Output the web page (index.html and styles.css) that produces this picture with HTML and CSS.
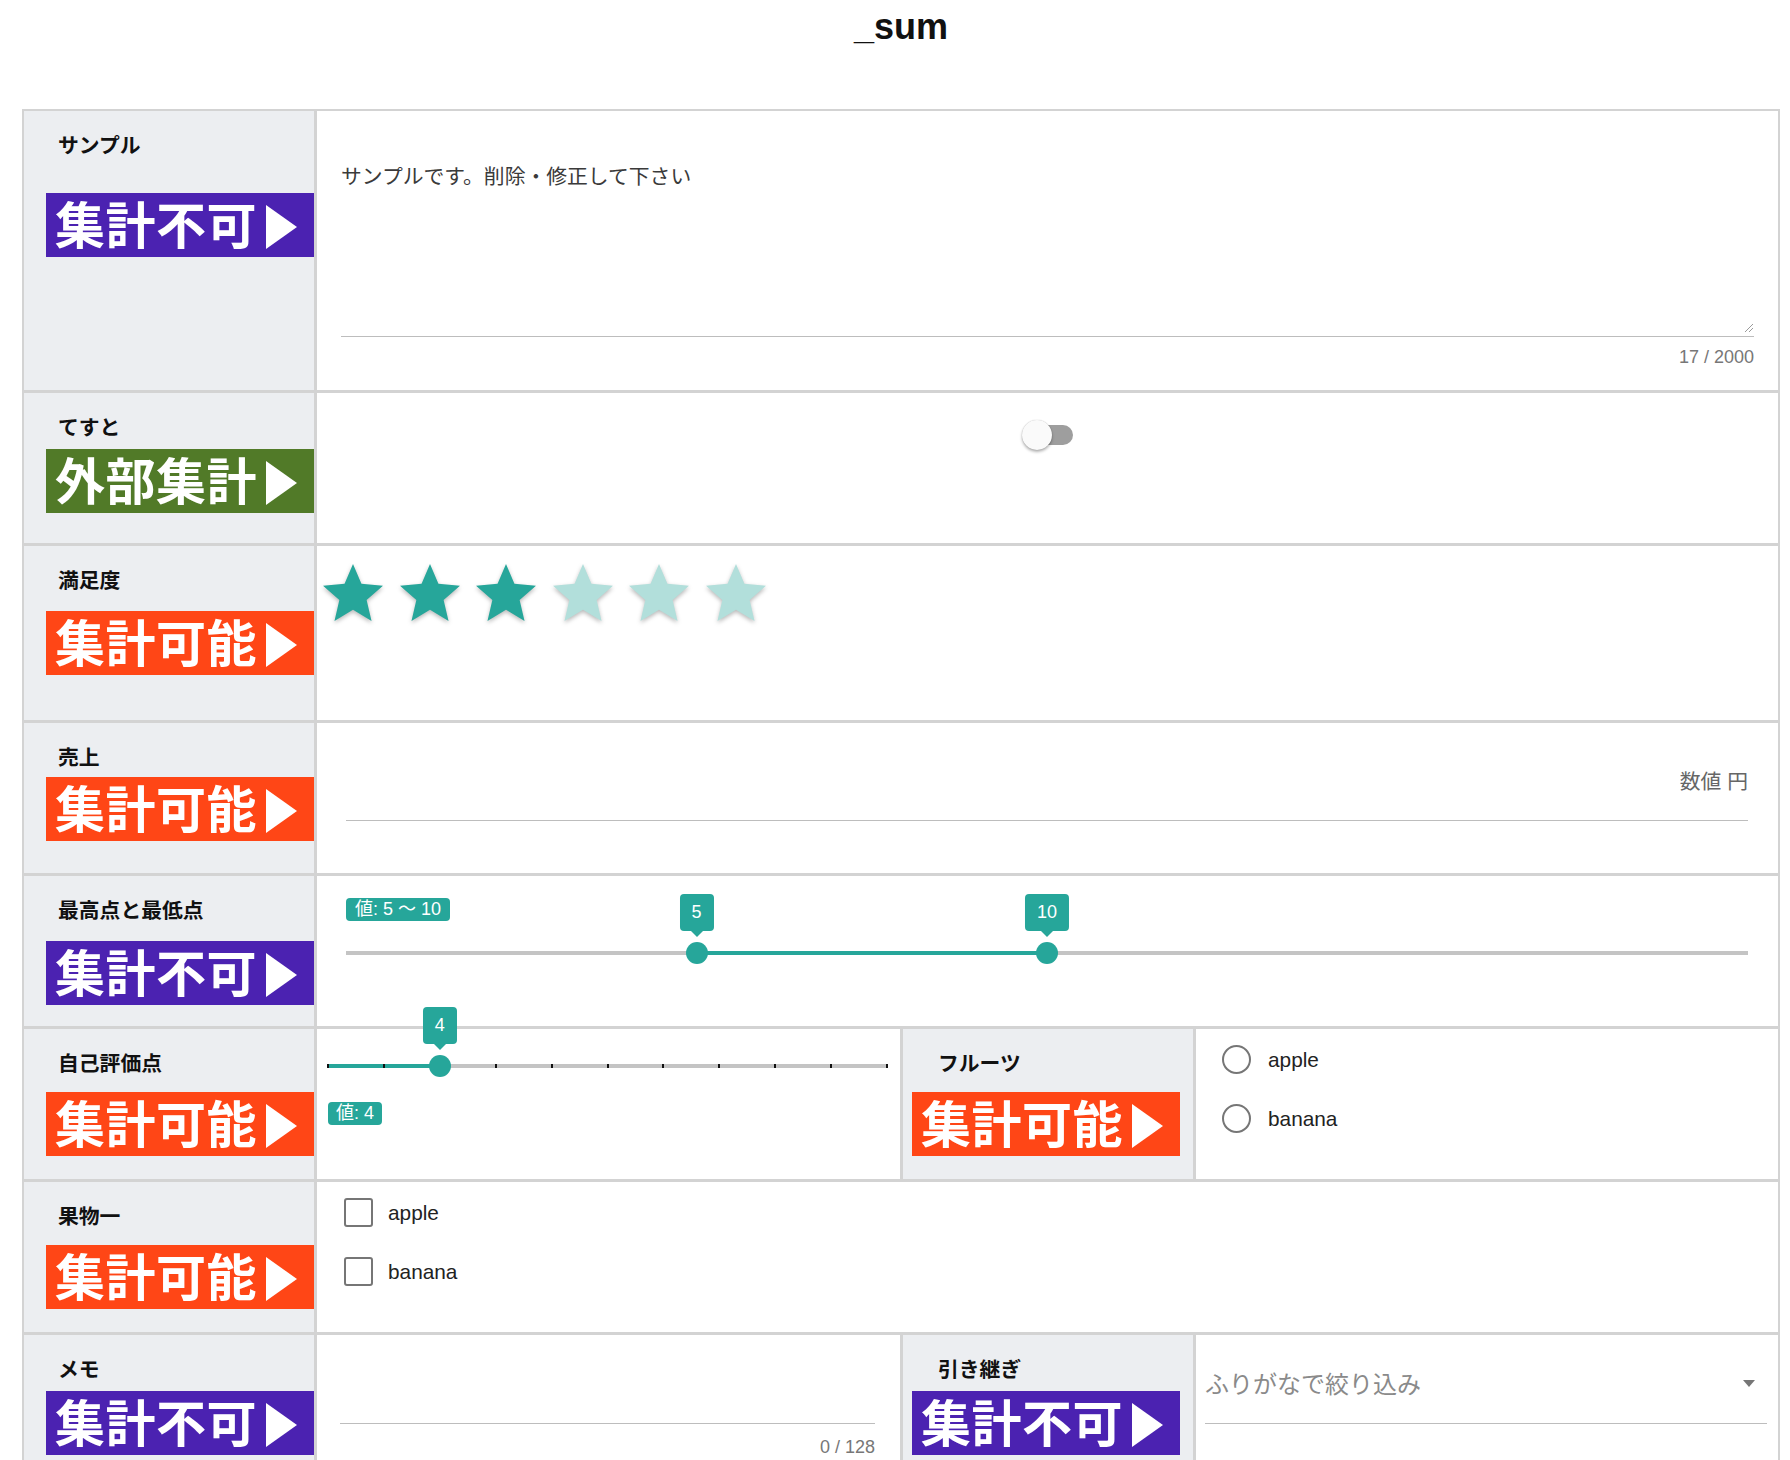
FILE: index.html
```html
<!DOCTYPE html>
<html lang="ja">
<head>
<meta charset="utf-8">
<title>_sum</title>
<link rel="stylesheet" href="styles.css">
</head>
<body>
<div class="page">
  <h1 class="title">_sum</h1>
  <div class="sheet">

    <div class="row row--tall">
      <div class="label-cell">
        <div class="label">サンプル</div>
        <div class="badge badge--ng badge--mt33">集計不可</div>
      </div>
      <div class="value-cell">
        <div class="textfield">
          <div class="textarea">サンプルです。削除・修正して下さい
            <svg class="resize" width="8" height="8" viewBox="0 0 8 8"><path d="M8 0L0 8M8 4L4 8" stroke="#9a9a9a" stroke-width="1" fill="none"/></svg>
          </div>
          <div class="counter">17 / 2000</div>
        </div>
      </div>
    </div>

    <div class="row">
      <div class="label-cell">
        <div class="label">てすと</div>
        <div class="badge badge--ext badge--mt7">外部集計</div>
      </div>
      <div class="value-cell">
        <div class="toggle">
          <span class="toggle-track"></span>
          <span class="toggle-knob"></span>
        </div>
      </div>
    </div>

    <div class="row row--rating">
      <div class="label-cell">
        <div class="label">満足度</div>
        <div class="badge badge--ok badge--mt16">集計可能</div>
      </div>
      <div class="value-cell">
        <div class="stars">
          <svg class="star star--on" viewBox="0 0 24 24"><path d="M12,17.27L18.18,21L16.54,13.97L22,9.24L14.81,8.62L12,2L9.19,8.62L2,9.24L7.45,13.97L5.82,21L12,17.27Z"/></svg>
          <svg class="star star--on" viewBox="0 0 24 24"><path d="M12,17.27L18.18,21L16.54,13.97L22,9.24L14.81,8.62L12,2L9.19,8.62L2,9.24L7.45,13.97L5.82,21L12,17.27Z"/></svg>
          <svg class="star star--on" viewBox="0 0 24 24"><path d="M12,17.27L18.18,21L16.54,13.97L22,9.24L14.81,8.62L12,2L9.19,8.62L2,9.24L7.45,13.97L5.82,21L12,17.27Z"/></svg>
          <svg class="star star--off" viewBox="0 0 24 24"><path d="M12,17.27L18.18,21L16.54,13.97L22,9.24L14.81,8.62L12,2L9.19,8.62L2,9.24L7.45,13.97L5.82,21L12,17.27Z"/></svg>
          <svg class="star star--off" viewBox="0 0 24 24"><path d="M12,17.27L18.18,21L16.54,13.97L22,9.24L14.81,8.62L12,2L9.19,8.62L2,9.24L7.45,13.97L5.82,21L12,17.27Z"/></svg>
          <svg class="star star--off" viewBox="0 0 24 24"><path d="M12,17.27L18.18,21L16.54,13.97L22,9.24L14.81,8.62L12,2L9.19,8.62L2,9.24L7.45,13.97L5.82,21L12,17.27Z"/></svg>
        </div>
      </div>
    </div>

    <div class="row">
      <div class="label-cell">
        <div class="label">売上</div>
        <div class="badge badge--ok badge--mt5">集計可能</div>
      </div>
      <div class="value-cell">
        <div class="textfield textfield--number">
          <div class="number-input">数値 円</div>
        </div>
      </div>
    </div>

    <div class="row">
      <div class="label-cell">
        <div class="label">最高点と最低点</div>
        <div class="badge badge--ng badge--mt16">集計不可</div>
      </div>
      <div class="value-cell">
        <div class="slider slider--range">
          <span class="chip">値: 5 〜 10</span>
          <div class="range range--spaced">
            <span class="range-track"></span>
            <span class="range-fill" style="left: 25%; width: 25%;"></span>
            <span class="range-thumb" style="left: 25%;"><span class="thumb-label">5</span></span>
            <span class="range-thumb" style="left: 50%;"><span class="thumb-label">10</span></span>
          </div>
        </div>
      </div>
    </div>

    <div class="row">
      <div class="label-cell">
        <div class="label">自己評価点</div>
        <div class="badge badge--ok">集計可能</div>
      </div>
      <div class="value-cell value-cell--half">
        <div class="slider slider--ticks">
          <div class="range">
            <span class="range-track"></span>
            <span class="range-fill" style="left: 0%; width: 20%;"></span>
            <span class="tick" style="left: 0%;"></span>
            <span class="tick" style="left: 10%;"></span>
            <span class="tick" style="left: 20%;"></span>
            <span class="tick" style="left: 30%;"></span>
            <span class="tick" style="left: 40%;"></span>
            <span class="tick" style="left: 50%;"></span>
            <span class="tick" style="left: 60%;"></span>
            <span class="tick" style="left: 70%;"></span>
            <span class="tick" style="left: 80%;"></span>
            <span class="tick" style="left: 90%;"></span>
            <span class="tick" style="left: 100%;"></span>
            <span class="range-thumb" style="left: 20%;"><span class="thumb-label">4</span></span>
          </div>
          <span class="chip chip--below">値: 4</span>
        </div>
      </div>
      <div class="label-cell label-cell--inner">
        <div class="label">フルーツ</div>
        <div class="badge badge--ok">集計可能</div>
      </div>
      <div class="value-cell">
        <div class="options options--radio">
          <div class="option"><span class="radio"></span><span class="option-text">apple</span></div>
          <div class="option"><span class="radio"></span><span class="option-text">banana</span></div>
        </div>
      </div>
    </div>

    <div class="row">
      <div class="label-cell">
        <div class="label">果物一</div>
        <div class="badge badge--ok">集計可能</div>
      </div>
      <div class="value-cell">
        <div class="options options--check">
          <div class="option"><span class="checkbox"></span><span class="option-text option-text--check">apple</span></div>
          <div class="option"><span class="checkbox"></span><span class="option-text option-text--check">banana</span></div>
        </div>
      </div>
    </div>

    <div class="row">
      <div class="label-cell">
        <div class="label">メモ</div>
        <div class="badge badge--ng badge--mt7">集計不可</div>
      </div>
      <div class="value-cell value-cell--half">
        <div class="textfield textfield--memo">
          <div class="memo-input"></div>
          <div class="counter counter--memo">0 / 128</div>
        </div>
      </div>
      <div class="label-cell label-cell--inner">
        <div class="label">引き継ぎ</div>
        <div class="badge badge--ng badge--mt7">集計不可</div>
      </div>
      <div class="value-cell">
        <div class="select">
          <div class="select-field">
            <span class="select-placeholder">ふりがなで絞り込み</span>
            <span class="select-arrow"></span>
          </div>
        </div>
      </div>
    </div>

  </div>
</div>
</body>
</html>
```

FILE: styles.css
```css
* {
  box-sizing: border-box;
}

html,
body {
  margin: 0;
  background: #ffffff;
}

body {
  font-family: "Liberation Sans", "Noto Sans CJK JP", sans-serif;
  font-size: 20.8px;
  color: #222222;
}

.page {
  padding: 0 10px 0 22px;
}

.title {
  margin: 0;
  padding-bottom: 55px;
  font-size: 36px;
  line-height: 54px;
  font-weight: 700;
  text-align: center;
  color: #111111;
}

.sheet {
  border: 2px solid #d3d3d3;
  border-bottom: none;
}

.row {
  display: flex;
  min-height: 153px;
  border-top: 3px solid #d3d3d3;
}

.row:first-child {
  border-top: none;
}

.row--tall {
  min-height: 279px;
}

.row--rating {
  min-height: 177px;
}

/* label column */
.label-cell {
  width: 293px;
  flex: none;
  background: #eceef1;
  border-right: 3px solid #d3d3d3;
  padding-top: 21px;
}

.label {
  margin-left: 34px;
  font-weight: 700;
  font-size: 20.8px;
  line-height: 28px;
  color: #111111;
}

.label-cell--inner .label {
  margin-left: 35px;
}

.badge {
  display: flex;
  align-items: center;
  width: 268px;
  height: 64px;
  margin: 14px 0 0 22px;
  padding: 3px 0 0 9px;
  color: #ffffff;
  font-size: 50px;
  font-weight: 700;
  line-height: 1;
  white-space: nowrap;
  letter-spacing: 0.5px;
}

.badge::after {
  content: "";
  margin-left: 9px;
  border-left: 31px solid #ffffff;
  border-top: 22.5px solid transparent;
  border-bottom: 22.5px solid transparent;
}

.label-cell--inner .badge {
  margin-left: 9px;
}

.badge--ng {
  background: #4b22b1;
}

.badge--ok {
  background: #ff4616;
}

.badge--ext {
  background: #517a28;
}

.badge--mt5 {
  margin-top: 5px;
}

.badge--mt7 {
  margin-top: 7px;
}

.badge--mt16 {
  margin-top: 16px;
}

.badge--mt33 {
  margin-top: 33px;
}

/* value column */
.value-cell {
  flex: 1;
  min-width: 0;
}

.value-cell--half {
  flex: none;
  width: 586px;
  border-right: 3px solid #d3d3d3;
}

.textfield {
  padding: 50px 24px 0 24px;
}

.textarea {
  position: relative;
  height: 176px;
  border-bottom: 1px solid #bdbdbd;
  line-height: 32px;
  color: #3a3a3a;
}

.resize {
  position: absolute;
  right: 1px;
  bottom: 4px;
}

.counter {
  margin-top: 8px;
  text-align: right;
  font-size: 18px;
  line-height: 24px;
  color: #777777;
}

/* toggle */
.toggle {
  position: relative;
  width: 51px;
  height: 30px;
  margin: 27px auto 0;
}

.toggle-track {
  position: absolute;
  right: 0;
  top: 5px;
  width: 46px;
  height: 20px;
  border-radius: 10px;
  background: #9e9e9e;
}

.toggle-knob {
  position: absolute;
  left: 0;
  top: 0;
  width: 30px;
  height: 30px;
  border-radius: 50%;
  background: #fafafa;
  box-shadow: 0 2px 3px rgba(0, 0, 0, 0.3), 0 0 1px rgba(0, 0, 0, 0.25);
}

/* rating */
.stars {
  display: flex;
  gap: 4.6px;
  padding-top: 12px;
}

.star {
  width: 72px;
  height: 72px;
  filter: drop-shadow(0 2px 2px rgba(0, 0, 0, 0.28));
}

.star--on {
  fill: #26a69a;
}

.star--off {
  fill: #b2dfdb;
}

/* number */
.textfield--number {
  padding: 43px 30px 0 29px;
}

.number-input {
  padding-bottom: 22px;
  border-bottom: 1px solid #bdbdbd;
  text-align: right;
  line-height: 32px;
  color: #666666;
}

/* sliders */
.slider {
  display: flex;
  flex-direction: column;
  align-items: flex-start;
}

.slider--range {
  padding: 22px 30px 0 29px;
}

.slider--ticks {
  padding: 25.5px 13px 0 11px;
}

.chip {
  display: block;
  height: 23px;
  padding: 0 9px;
  border-radius: 4px;
  background: #26a69a;
  color: #ffffff;
  font-size: 18px;
  line-height: 23px;
  white-space: nowrap;
}

.chip--below {
  margin-top: 25px;
  padding: 0 8px;
}

.range {
  position: relative;
  align-self: stretch;
  height: 22px;
}

.range--spaced {
  margin-top: 21px;
}

.range-track {
  position: absolute;
  left: 0;
  right: 0;
  top: 9px;
  height: 4px;
  background: #c4c4c4;
}

.range-fill {
  position: absolute;
  top: 9px;
  height: 4px;
  background: #26a69a;
}

.tick {
  position: absolute;
  top: 9px;
  width: 2px;
  height: 4px;
  margin-left: -1px;
  background: #111111;
}

.range-thumb {
  position: absolute;
  top: 0;
  width: 22px;
  height: 22px;
  margin-left: -11px;
  border-radius: 50%;
  background: #26a69a;
}

.thumb-label {
  position: absolute;
  left: 50%;
  bottom: calc(100% + 11px);
  transform: translateX(-50%);
  height: 37px;
  padding: 0 12px;
  border-radius: 4px;
  background: #26a69a;
  color: #ffffff;
  font-size: 18px;
  line-height: 37px;
  white-space: nowrap;
  z-index: 2;
}

.thumb-label::after {
  content: "";
  position: absolute;
  top: 100%;
  left: 50%;
  margin-left: -6px;
  border-top: 6px solid #26a69a;
  border-left: 6px solid transparent;
  border-right: 6px solid transparent;
}

/* options */
.options {
  display: flex;
  flex-direction: column;
  gap: 30px;
  padding-top: 16px;
}

.options--radio {
  padding-left: 26px;
}

.options--check {
  padding-left: 27px;
}

.option {
  display: flex;
  align-items: center;
  height: 29px;
}

.radio {
  width: 29px;
  height: 29px;
  border: 2.5px solid #767676;
  border-radius: 50%;
}

.checkbox {
  width: 29px;
  height: 29px;
  border: 2.5px solid #767676;
  border-radius: 3px;
}

.option-text {
  margin-left: 17px;
  line-height: 29px;
  color: #222222;
}

.option-text--check {
  margin-left: 15px;
}

/* memo */
.textfield--memo {
  padding: 0 25px 0 23px;
}

.memo-input {
  height: 89px;
  border-bottom: 1px solid #bdbdbd;
}

.counter--memo {
  margin-top: 11px;
}

/* select */
.select {
  padding: 0 11px 0 9px;
}

.select-field {
  display: flex;
  align-items: center;
  padding: 34px 0 22px;
  border-bottom: 1px solid #bdbdbd;
}

.select-placeholder {
  flex: 1;
  font-size: 24px;
  line-height: 32px;
  color: #8a8a8a;
}

.select-arrow {
  width: 0;
  height: 0;
  margin: -3px 12px 0 0;
  border-top: 7px solid #767676;
  border-left: 6.5px solid transparent;
  border-right: 6.5px solid transparent;
}
```
